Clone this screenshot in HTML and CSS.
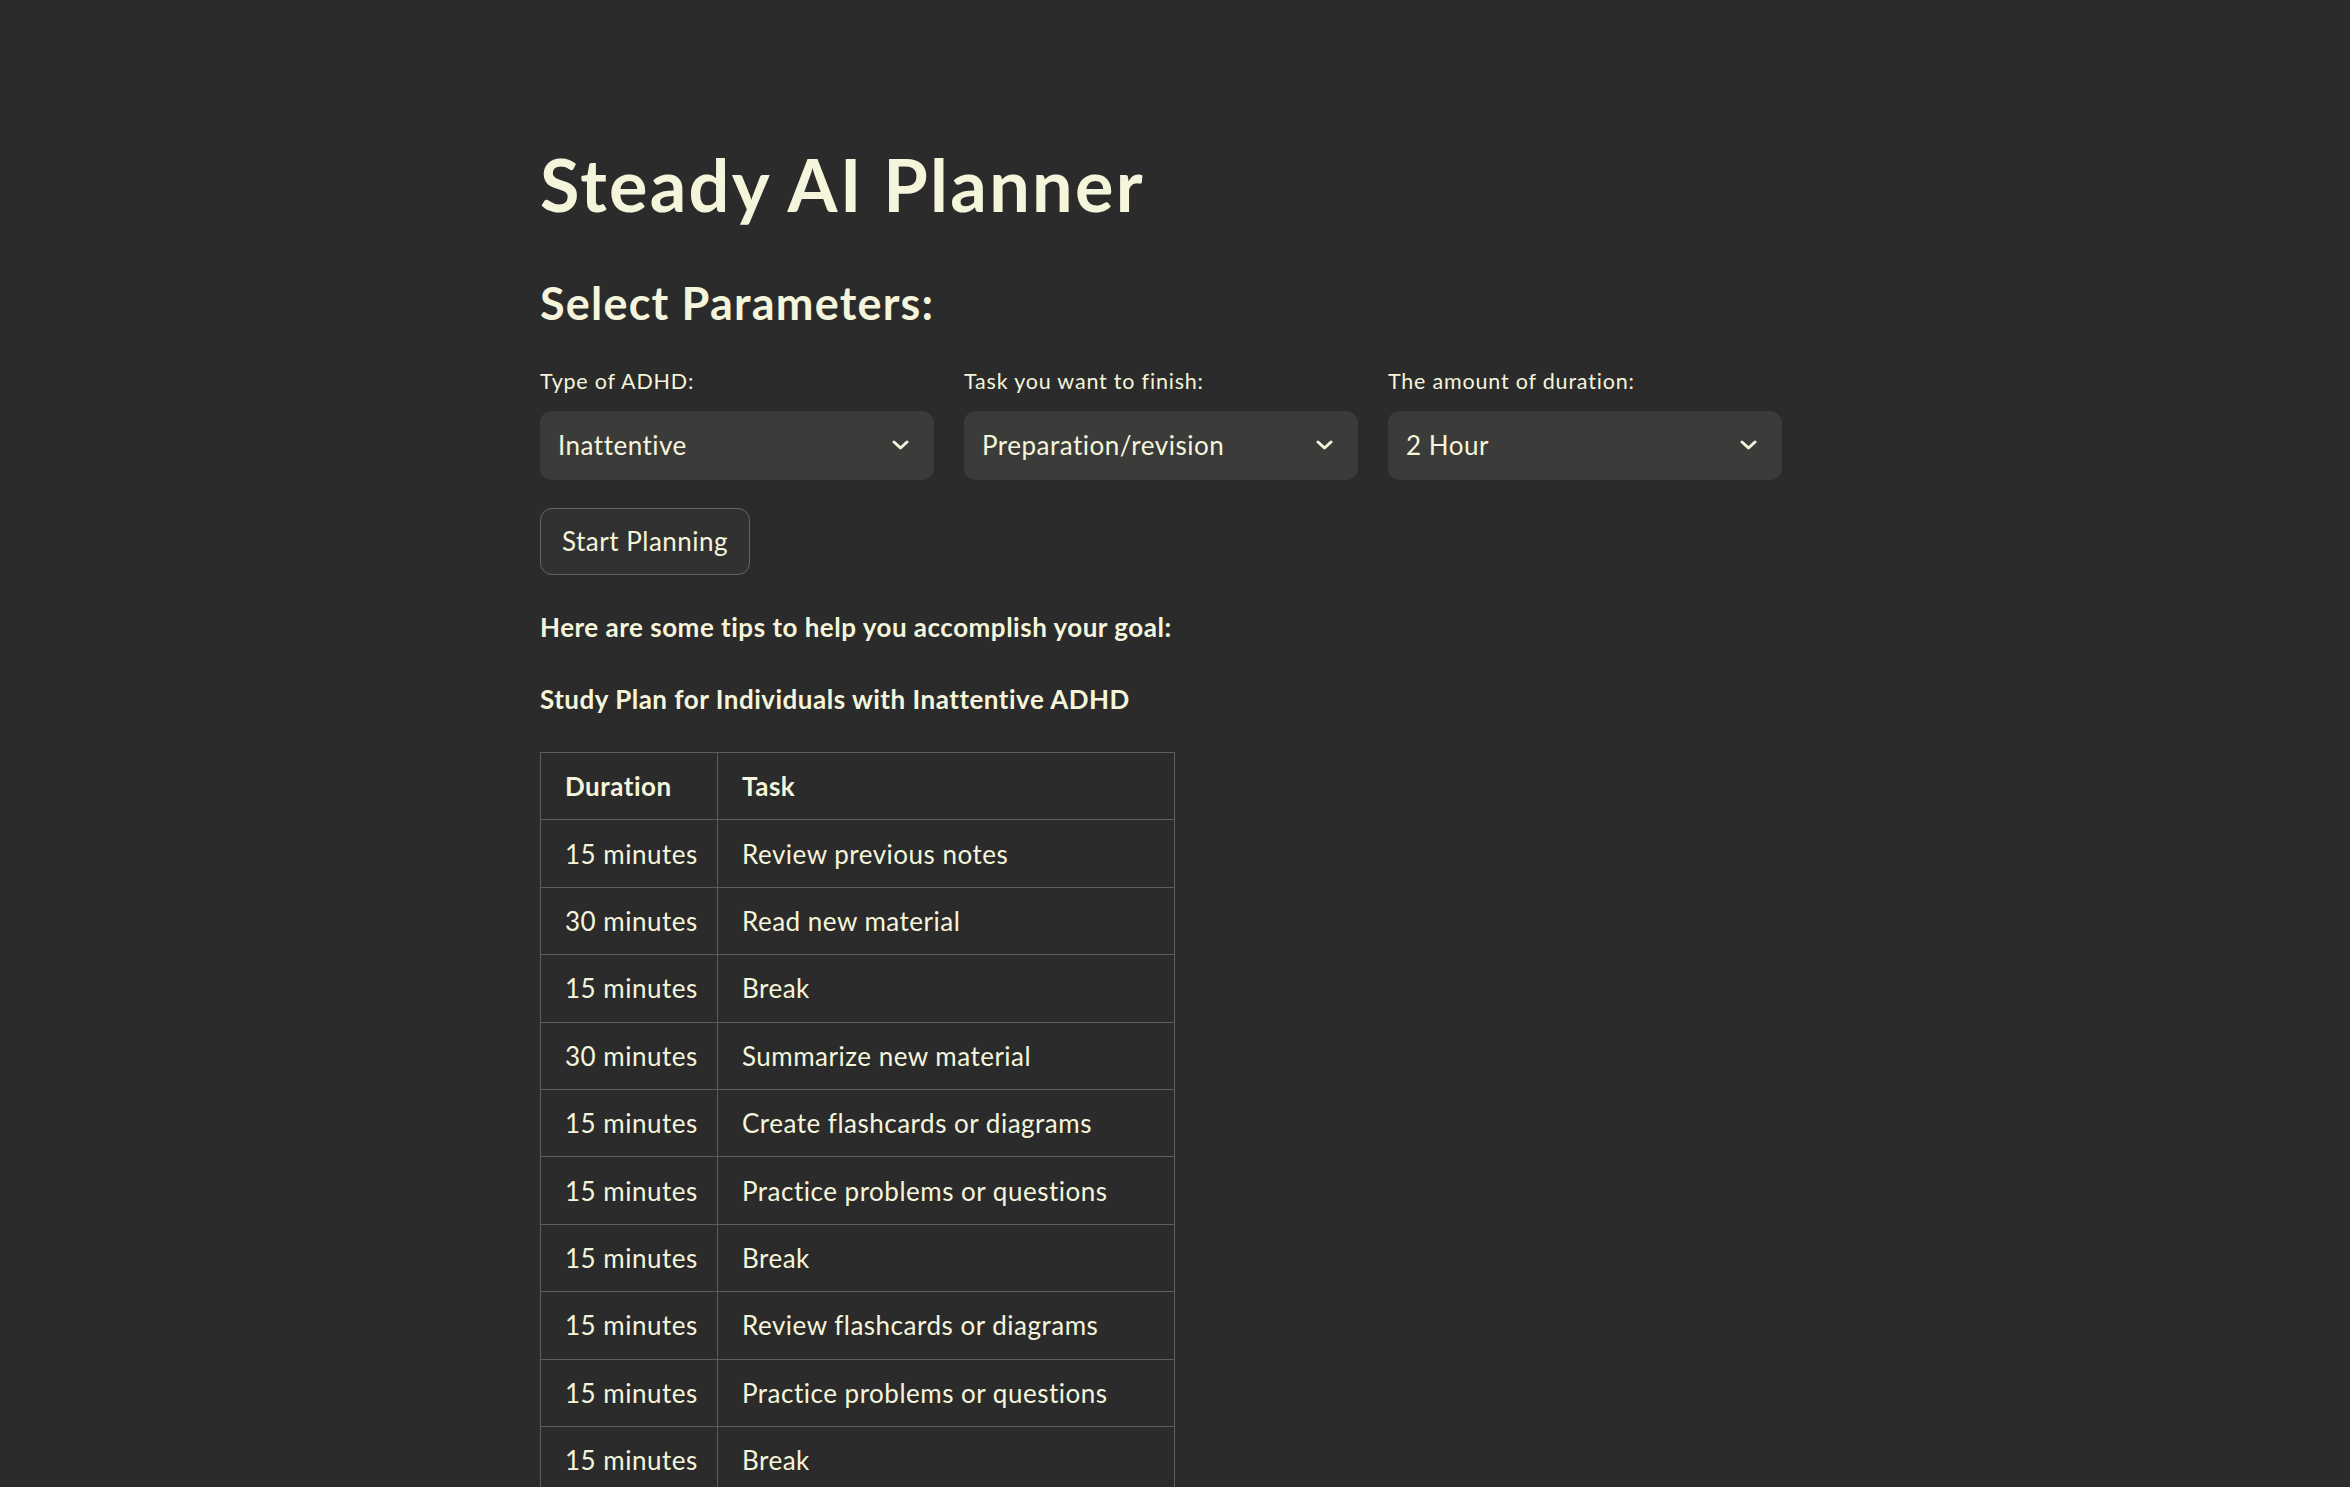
FILE: index.html
```html
<!DOCTYPE html>
<html lang="en">
<head>
<meta charset="utf-8">
<title>Steady AI Planner</title>
<link rel="stylesheet" href="styles.css">
</head>
<body>
<main class="page">
  <h1 class="title">Steady AI Planner</h1>
  <h3 class="subtitle">Select Parameters:</h3>
  <div class="params">
    <div class="field">
      <label class="field-label">Type of ADHD:</label>
      <div class="select">
        <span class="select-value">Inattentive</span>
        <svg class="chev" width="17" height="10" viewBox="0 0 17 10"><polyline points="2,2 8.5,8 15,2" fill="none" stroke="#f5f5dc" stroke-width="3" stroke-linecap="round" stroke-linejoin="round"/></svg>
      </div>
    </div>
    <div class="field">
      <label class="field-label">Task you want to finish:</label>
      <div class="select">
        <span class="select-value">Preparation/revision</span>
        <svg class="chev" width="17" height="10" viewBox="0 0 17 10"><polyline points="2,2 8.5,8 15,2" fill="none" stroke="#f5f5dc" stroke-width="3" stroke-linecap="round" stroke-linejoin="round"/></svg>
      </div>
    </div>
    <div class="field">
      <label class="field-label">The amount of duration:</label>
      <div class="select">
        <span class="select-value">2 Hour</span>
        <svg class="chev" width="17" height="10" viewBox="0 0 17 10"><polyline points="2,2 8.5,8 15,2" fill="none" stroke="#f5f5dc" stroke-width="3" stroke-linecap="round" stroke-linejoin="round"/></svg>
      </div>
    </div>
  </div>
  <button class="btn">Start Planning</button>
  <p class="strong-line tips">Here are some tips to help you accomplish your goal:</p>
  <p class="strong-line plan">Study Plan for Individuals with Inattentive ADHD</p>
  <table class="plan-table">
    <colgroup><col class="col-dur"><col class="col-task"></colgroup>
    <thead>
      <tr><th>Duration</th><th>Task</th></tr>
    </thead>
    <tbody>
      <tr><td>15 minutes</td><td>Review previous notes</td></tr>
      <tr><td>30 minutes</td><td>Read new material</td></tr>
      <tr><td>15 minutes</td><td>Break</td></tr>
      <tr><td>30 minutes</td><td>Summarize new material</td></tr>
      <tr><td>15 minutes</td><td>Create flashcards or diagrams</td></tr>
      <tr><td>15 minutes</td><td>Practice problems or questions</td></tr>
      <tr><td>15 minutes</td><td>Break</td></tr>
      <tr><td>15 minutes</td><td>Review flashcards or diagrams</td></tr>
      <tr><td>15 minutes</td><td>Practice problems or questions</td></tr>
      <tr><td>15 minutes</td><td>Break</td></tr>
    </tbody>
  </table>
</main>
</body>
</html>
```

FILE: styles.css
```css
html, body {
  margin: 0;
  padding: 0;
  background: #2b2b2b;
}
body {
  color: #f5f5dc;
  font-family: Lato, "Noto Sans", sans-serif;
  overflow: hidden;
}
.page {
  width: 1242px;
  margin-left: 540px;
  padding-top: 142px;
}
.title {
  margin: 0;
  font-size: 72px;
  line-height: 84px;
  font-weight: 700;
  letter-spacing: 2.3px;
}
.subtitle {
  margin: 50.6px 0 0;
  font-size: 45px;
  line-height: 52px;
  font-weight: 700;
  letter-spacing: 1.2px;
}
.params {
  display: grid;
  grid-template-columns: repeat(3, 1fr);
  column-gap: 30px;
  margin-top: 37.4px;
}
.field {
  display: flex;
  flex-direction: column;
}
.field-label {
  font-size: 21.5px;
  line-height: 30px;
  height: 30px;
  letter-spacing: 0.8px;
  margin-bottom: 15px;
}
.select {
  height: 69px;
  box-sizing: border-box;
  background: #3b3b3a;
  border-radius: 12px;
  display: flex;
  align-items: center;
  justify-content: space-between;
  padding: 0 25px 0 18px;
}
.select-value {
  font-size: 26px;
  letter-spacing: 0.5px;
}
.chev {
  display: block;
}
.btn {
  display: block;
  margin-top: 28px;
  height: 67px;
  box-sizing: border-box;
  padding: 0 21px;
  background: #313131;
  border: 1px solid #66665f;
  border-radius: 12px;
  color: #f5f5dc;
  font-family: Lato, "Noto Sans", sans-serif;
  font-size: 26px;
  letter-spacing: 0.5px;
  text-align: left;
}
.strong-line {
  margin: 0;
  font-weight: 700;
  font-size: 26px;
  line-height: 36px;
  letter-spacing: 0.5px;
}
.tips {
  margin-top: 34px;
}
.plan {
  margin-top: 36px;
}
.plan-table {
  margin-top: 35px;
  width: 635px;
  table-layout: fixed;
  border-collapse: collapse;
  font-size: 26px;
  letter-spacing: 0.5px;
}
.col-dur {
  width: 177px;
}
.plan-table th,
.plan-table td {
  border: 1px solid #5e5e58;
  height: 66.4px;
  padding: 0 0 0 24px;
  text-align: left;
  vertical-align: middle;
  font-weight: 400;
  white-space: nowrap;
}
.plan-table th {
  font-weight: 700;
}
```
